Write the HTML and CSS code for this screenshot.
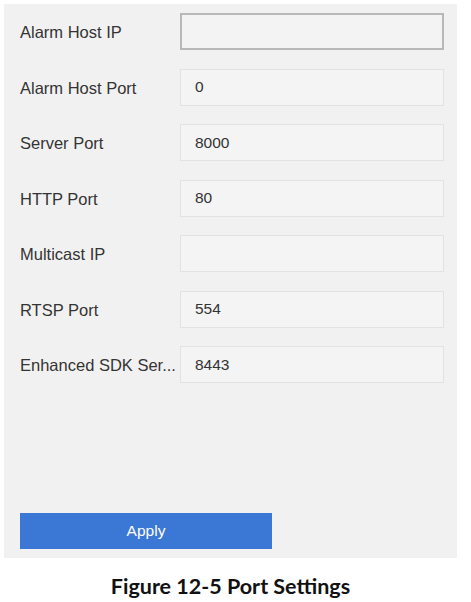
FILE: index.html
```html
<!DOCTYPE html>
<html>
<head>
<meta charset="utf-8">
<link rel="stylesheet" href="styles.css">
</head>
<body>
<div class="panel">
  <div class="form">
    <div class="row"><span class="label">Alarm Host IP</span><div class="field focus"></div></div>
    <div class="row"><span class="label">Alarm Host Port</span><div class="field">0</div></div>
    <div class="row"><span class="label">Server Port</span><div class="field">8000</div></div>
    <div class="row"><span class="label">HTTP Port</span><div class="field">80</div></div>
    <div class="row"><span class="label">Multicast IP</span><div class="field"></div></div>
    <div class="row"><span class="label">RTSP Port</span><div class="field">554</div></div>
    <div class="row"><span class="label">Enhanced SDK Ser...</span><div class="field">8443</div></div>
  </div>
  <button class="apply">Apply</button>
</div>
<div class="caption">Figure 12-5 Port Settings</div>
</body>
</html>
```
FILE: styles.css
```css
html, body { margin: 0; padding: 0; background: #ffffff; }
body { width: 471px; height: 602px; overflow: hidden; }
.panel {
  margin: 4px 0 0 4px;
  width: 453px;
  height: 554px;
  background: #f2f1f2;
  box-sizing: border-box;
  padding: 9px 0 0 16px;
  display: flex;
  flex-direction: column;
}
.form { display: flex; flex-direction: column; gap: 18.5px; }
.row { display: flex; align-items: center; height: 37px; }
.label {
  width: 160px;
  padding-top: 2px;
  font-family: "Liberation Sans", Arial, sans-serif;
  font-size: 16.5px;
  color: #343434;
  white-space: nowrap;
}
.field {
  width: 264px;
  height: 37px;
  box-sizing: border-box;
  border: 1px solid #e2e2e2;
  background: #f4f4f4;
  padding-left: 14px;
  display: flex;
  align-items: center;
  font-family: "Liberation Sans", Arial, sans-serif;
  font-size: 15.5px;
  color: #333333;
}
.field.focus { border: 2px solid #b8b8b8; background: #f3f3f3; }
.apply {
  margin-top: 130px;
  width: 252px;
  height: 36px;
  border: none;
  background: #3b78d6;
  color: #ffffff;
  font-family: "Liberation Sans", Arial, sans-serif;
  font-size: 15.5px;
  padding: 0;
}
.caption {
  margin-top: 15px;
  text-align: center;
  font-family: Lato, "Open Sans", sans-serif;
  font-weight: 700;
  font-size: 21.5px;
  color: #111111;
  padding-right: 10px;
}
```
